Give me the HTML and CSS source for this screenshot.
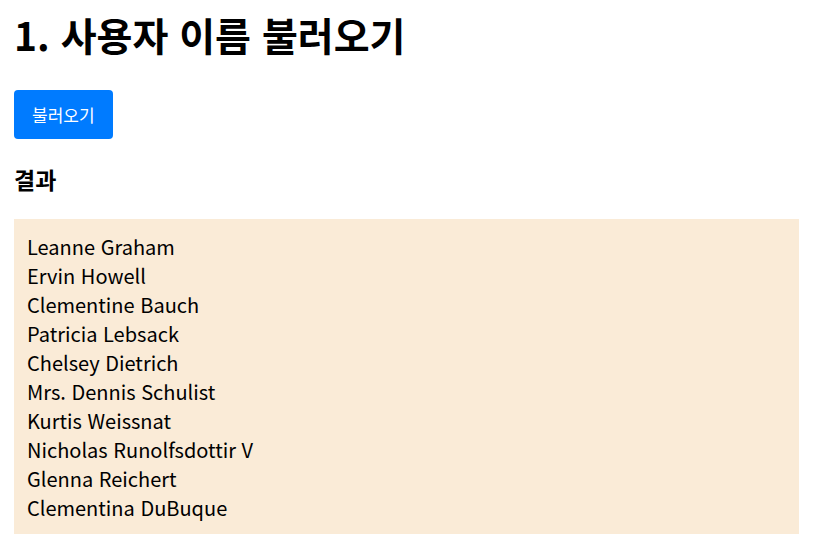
FILE: index.html
```html
<!DOCTYPE html>
<html lang="ko">
<head>
<meta charset="UTF-8">
<meta name="viewport" content="width=device-width, initial-scale=1">
<title>사용자 이름 불러오기</title>
<link rel="stylesheet" href="styles.css">
</head>
<body>
<h1>1. 사용자 이름 불러오기</h1>
<button type="button" class="load-button">불러오기</button>
<h3>결과</h3>
<div class="result">
<div>Leanne Graham</div>
<div>Ervin Howell</div>
<div>Clementine Bauch</div>
<div>Patricia Lebsack</div>
<div>Chelsey Dietrich</div>
<div>Mrs. Dennis Schulist</div>
<div>Kurtis Weissnat</div>
<div>Nicholas Runolfsdottir V</div>
<div>Glenna Reichert</div>
<div>Clementina DuBuque</div>
</div>
</body>
</html>
```
FILE: styles.css
```css
* {
  box-sizing: border-box;
}

body {
  margin: 0;
  padding: 6px 18px 11px 14px;
  background: #fff;
  color: #000;
  font-family: "Noto Sans CJK KR", sans-serif;
  font-size: 20px;
  line-height: 29px;
}

h1 {
  margin: 0 0 28px;
  font-size: 39px;
  line-height: 56px;
}

h3 {
  margin: 24px 0;
  font-size: 23px;
  line-height: 32px;
}

.load-button {
  display: block;
  padding: 12px 18px;
  border: 0;
  border-radius: 4px;
  background: #007bff;
  color: #fff;
  font-family: inherit;
  font-size: 17px;
  line-height: 25px;
  cursor: pointer;
}

.result {
  padding: 13px 13px 12px;
  background: #faebd7;
}
```
